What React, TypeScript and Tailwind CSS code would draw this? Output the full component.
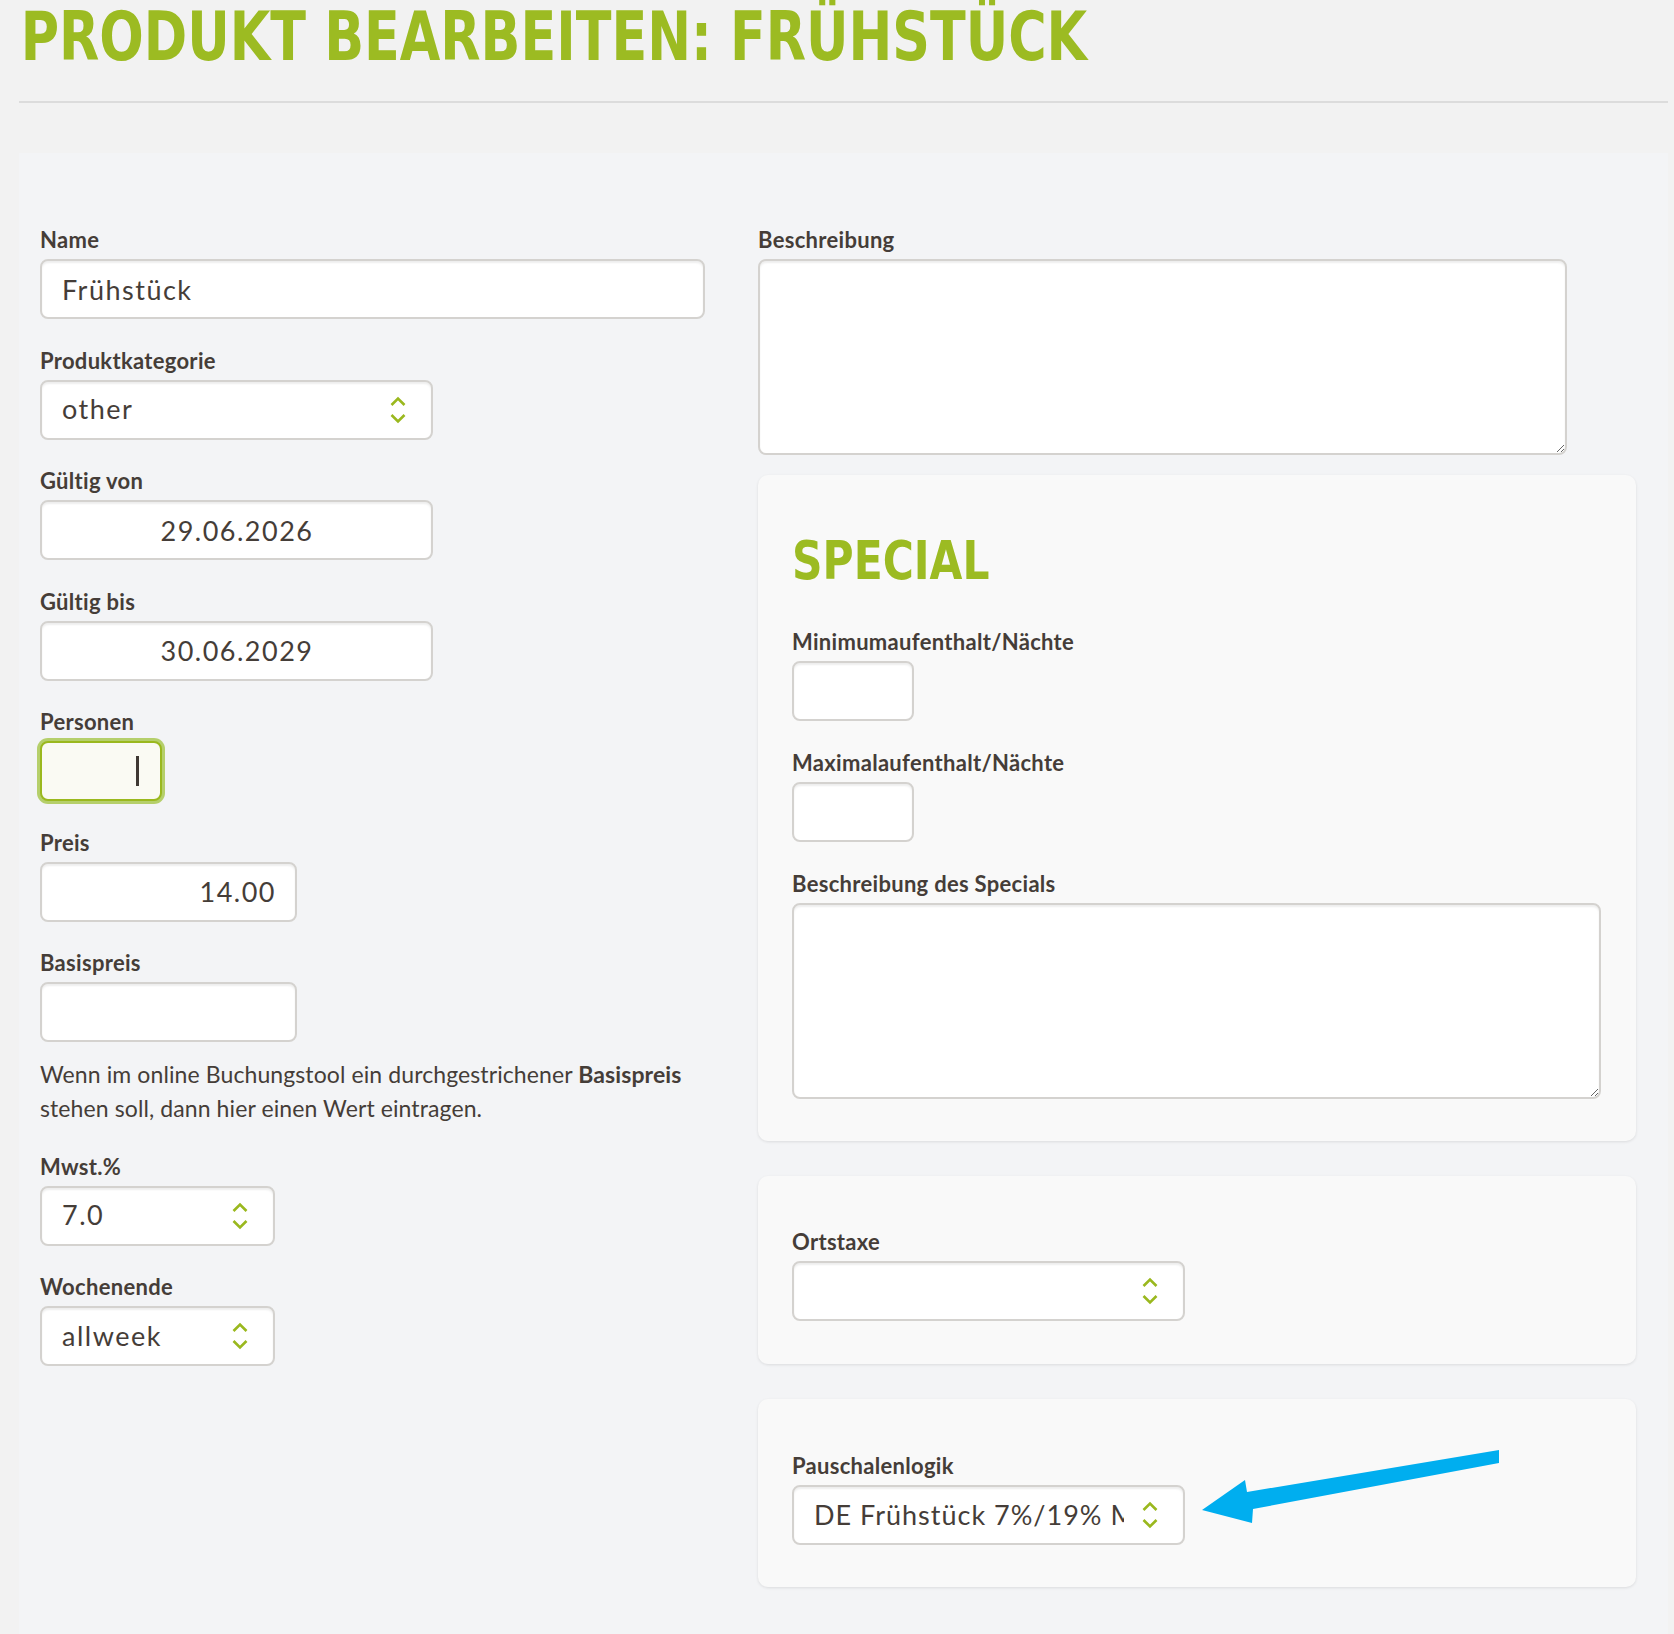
import React from 'react';

const labelCls = "block font-['Lato',sans-serif] font-bold text-[22px] tracking-[0.3px] leading-[27px] text-[#453d38] mb-[6px]";
const boxCls =
  "h-[60px] rounded-[8px] border-2 border-[#d4d2cf] bg-white shadow-[inset_0_2px_2px_rgba(0,0,0,0.07)] font-['Lato',sans-serif] text-[27px] tracking-[1.5px] text-[#453d38] outline-none";

const Chevrons = () => (
  <svg width="16" height="28" viewBox="0 0 16 28" fill="none" stroke="#9ab81e" strokeWidth={2.6}>
    <path d="M1.5 9 L8 2.5 L14.5 9" />
    <path d="M1.5 19 L8 25.5 L14.5 19" />
  </svg>
);

const Field = ({ label, children }: { label: string; children: React.ReactNode }) => (
  <div>
    <label className={labelCls}>{label}</label>
    {children}
  </div>
);

const TextInput = ({ value = '', width, align = 'left' }: { value?: string; width: string; align?: 'left' | 'center' | 'right' }) => (
  <input
    readOnly
    value={value}
    className={`${boxCls} ${width} pl-[20px] pr-[19px] ${align === 'center' ? 'text-center' : align === 'right' ? 'text-right' : 'text-left'}`}
  />
);

const Select = ({ value = '', width, clip = false }: { value?: string; width: string; clip?: boolean }) => (
  <div className={`${boxCls} ${width} flex items-center justify-between pl-[20px] pr-[25px]`}>
    <span className={clip ? 'w-[310px] overflow-hidden whitespace-nowrap tracking-[1px]' : ''}>{value}</span>
    <Chevrons />
  </div>
);

const TextArea = ({ width }: { width: string }) => (
  <textarea
    readOnly
    className={`block h-[196px] ${width} rounded-[8px] border-2 border-[#d4d2cf] bg-white shadow-[inset_0_2px_2px_rgba(0,0,0,0.07)] outline-none resize`}
  />
);

const Card = ({ children, className = '' }: { children: React.ReactNode; className?: string }) => (
  <div className={`relative w-[878px] rounded-[10px] bg-[#f9f9f9] px-[34px] shadow-[0_1px_3px_rgba(0,0,0,0.1)] ${className}`}>
    {children}
  </div>
);

export default function App() {
  return (
    <div className="min-h-[1634px] bg-[#f2f2f2] pl-[19px] pr-[6px]">
      {/* Kopfzeile */}
      <h1 className="pt-[4px] pl-[2px] origin-left scale-x-[0.868] font-['Liberation_Sans_Narrow','DejaVu_Sans_Condensed',sans-serif] font-stretch-condensed font-bold text-[67px] leading-[67px] text-[#9cbb22] whitespace-nowrap">
        PRODUKT BEARBEITEN: FRÜHSTÜCK
      </h1>
      <div className="mt-[30px] h-[2px] bg-[#dcdcdc]" />

      {/* Formular */}
      <div className="mt-[50px] bg-[#f3f4f6] pl-[21px] pt-[73px] pb-[47px] flex gap-[53px]">
        {/* linke Spalte */}
        <div className="w-[665px] flex flex-col gap-y-[27.5px]">
          <Field label="Name">
            <TextInput value="Frühstück" width="w-[665px]" />
          </Field>
          <Field label="Produktkategorie">
            <Select value="other" width="w-[393px]" />
          </Field>
          <Field label="Gültig von">
            <TextInput value="29.06.2026" width="w-[393px]" align="center" />
          </Field>
          <Field label="Gültig bis">
            <TextInput value="30.06.2029" width="w-[393px]" align="center" />
          </Field>
          <Field label="Personen">
            <div className="w-[122px] h-[60px] rounded-[8px] border-2 border-[#9ab81e] bg-[#fafaf3] shadow-[0_0_0_3px_rgba(160,195,60,0.75)] flex items-center justify-end pr-[21px]">
              <span className="w-[3px] h-[30px] bg-[#3f3833]" />
            </div>
          </Field>
          <Field label="Preis">
            <TextInput value="14.00" width="w-[257px]" align="right" />
          </Field>
          <Field label="Basispreis">
            <TextInput width="w-[257px]" />
            <p className="mt-[15px] font-['Lato',sans-serif] text-[23px] tracking-[0.1px] leading-[34px] text-[#453d38]">
              Wenn im online Buchungstool ein durchgestrichener <b>Basispreis</b>
              <br />
              stehen soll, dann hier einen Wert eintragen.
            </p>
          </Field>
          <Field label="Mwst.%">
            <Select value="7.0" width="w-[235px]" />
          </Field>
          <Field label="Wochenende">
            <Select value="allweek" width="w-[235px]" />
          </Field>
        </div>

        {/* rechte Spalte */}
        <div className="w-[878px] flex flex-col">
          <Field label="Beschreibung">
            <TextArea width="w-[809px]" />
          </Field>

          <Card className="mt-[20px] pt-[57px] pb-[42px]">
            <h2 className="origin-left scale-x-[0.89] font-['Liberation_Sans_Narrow','DejaVu_Sans_Condensed',sans-serif] font-stretch-condensed font-bold text-[53px] leading-[58px] text-[#9cbb22] mb-[38px]">
              SPECIAL
            </h2>
            <div className="flex flex-col gap-y-[28px]">
              <Field label="Minimumaufenthalt/Nächte">
                <TextInput width="w-[122px]" />
              </Field>
              <Field label="Maximalaufenthalt/Nächte">
                <TextInput width="w-[122px]" />
              </Field>
              <Field label="Beschreibung des Specials">
                <TextArea width="w-[809px]" />
              </Field>
            </div>
          </Card>

          <Card className="mt-[35px] pt-[52px] pb-[43px]">
            <Field label="Ortstaxe">
              <Select width="w-[393px]" />
            </Field>
          </Card>

          <Card className="mt-[35px] pt-[53px] pb-[42px]">
            <Field label="Pauschalenlogik">
              <Select value="DE Frühstück 7%/19% MwSt." width="w-[393px]" clip />
            </Field>
            {/* Hinweis-Pfeil */}
            <svg className="absolute left-[437px] top-[45px]" width="310" height="85" viewBox="0 0 310 85">
              <polygon points="7,66 50,36 52,48 304,6 304,19 58,65 57,79" fill="#00aeef" />
            </svg>
          </Card>
        </div>
      </div>
    </div>
  );
}
